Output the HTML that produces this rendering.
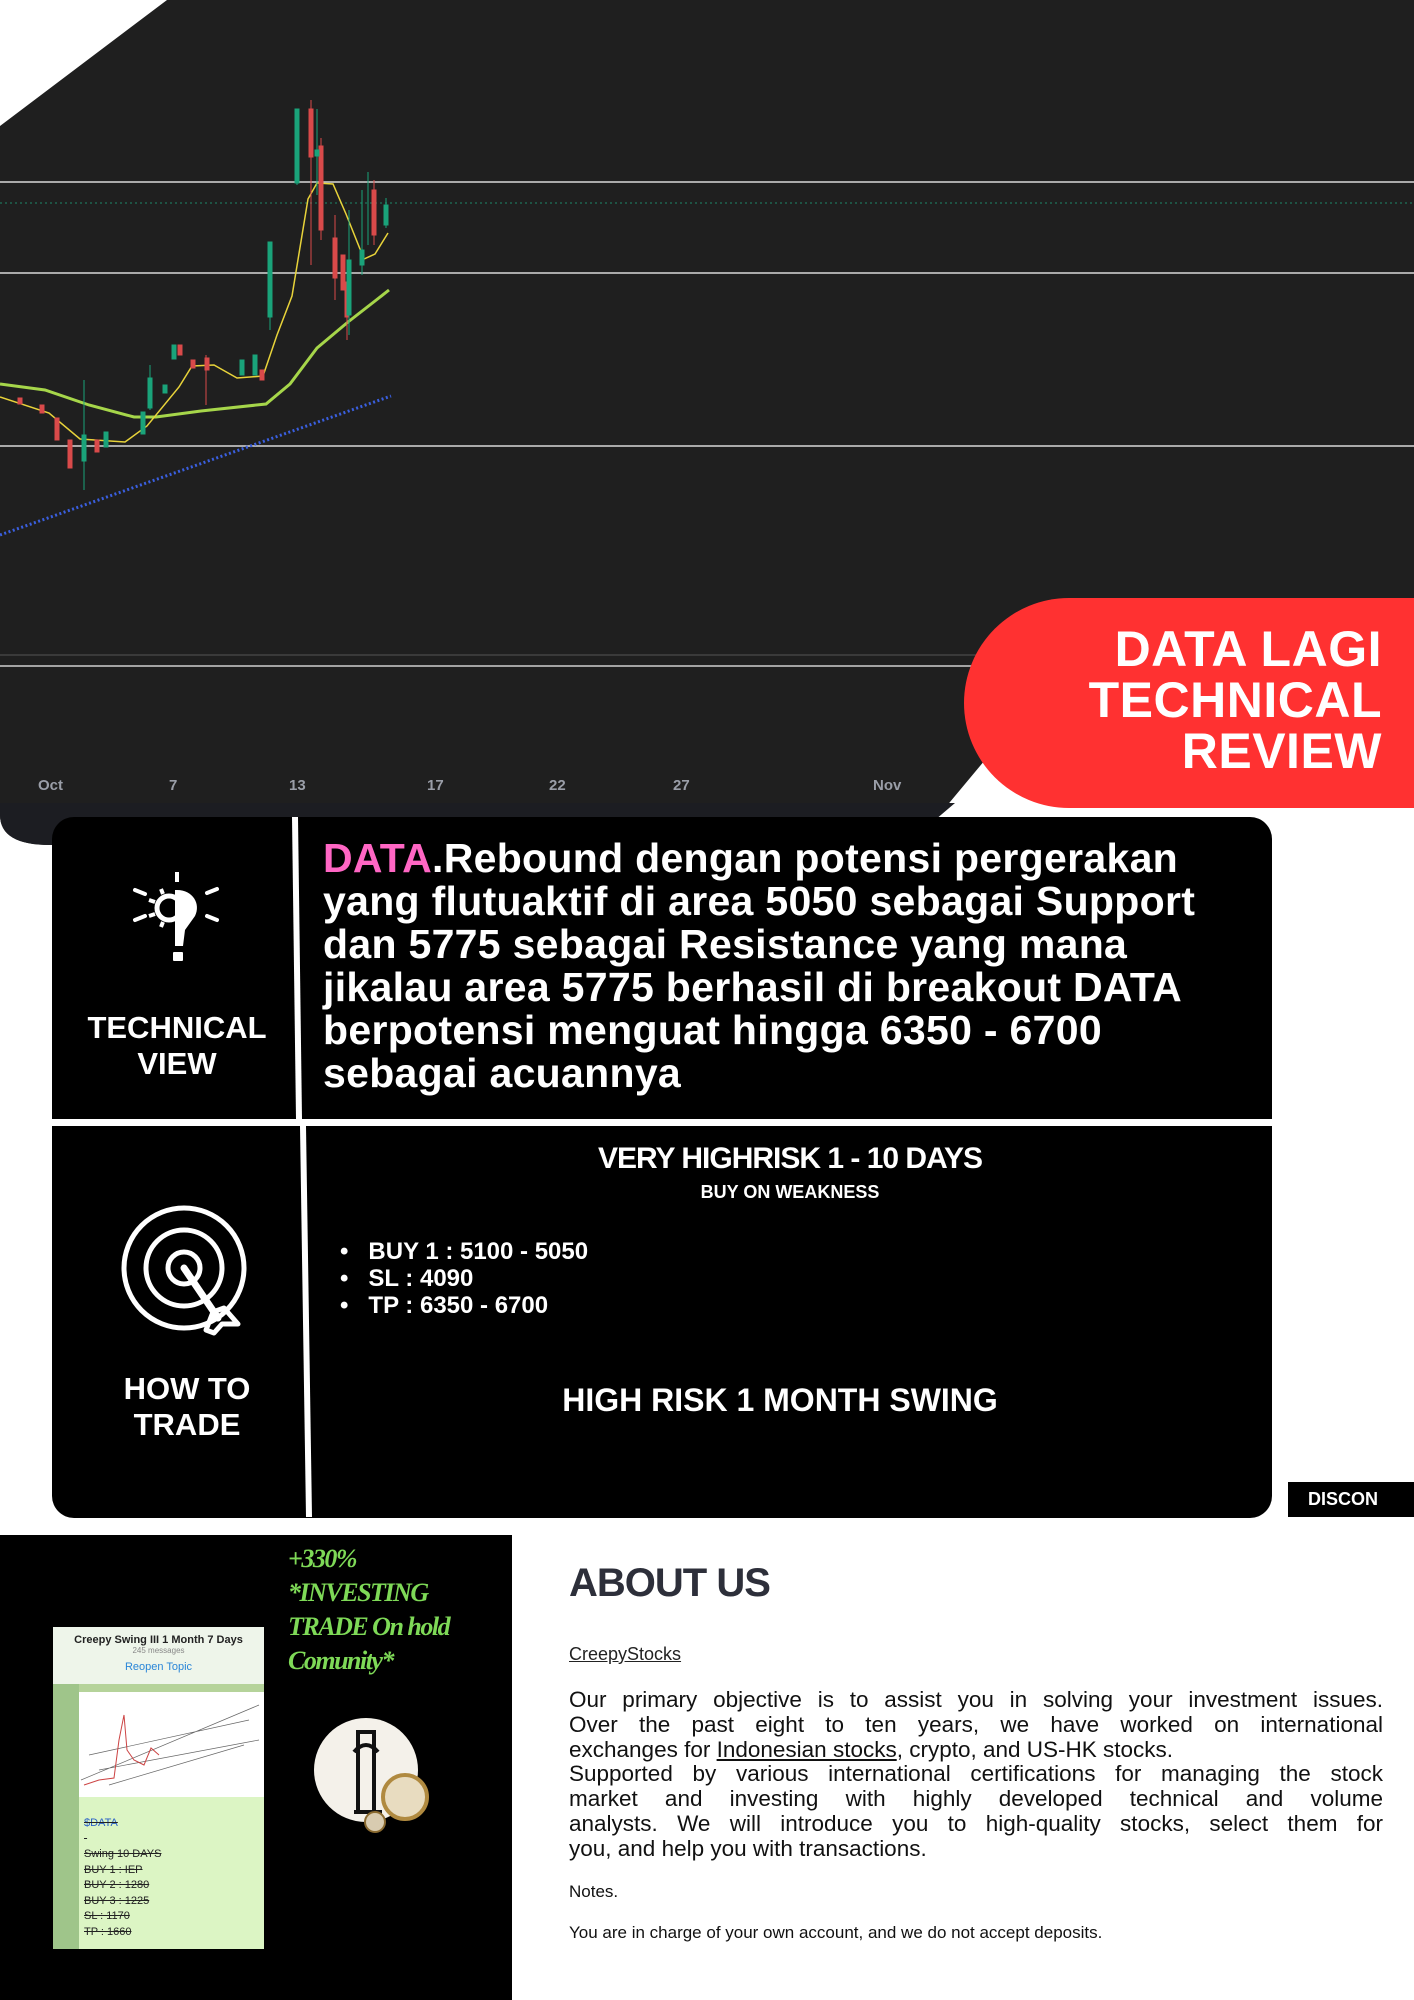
<!DOCTYPE html>
<html><head><meta charset="utf-8">
<style>
*{margin:0;padding:0;box-sizing:border-box}
body{width:1414px;height:2000px;background:#fff;position:relative;overflow:hidden;font-family:"Liberation Sans",sans-serif}
.abs{position:absolute}
.b{font-weight:bold}
.ax{position:absolute;top:777px;color:#9a9ea8;font-size:15px;font-weight:bold}
.para div{text-align:justify;text-align-last:justify;height:24.8px;line-height:24.8px}
.para div.l{text-align-last:left}
</style></head><body>

<svg class="abs" style="left:0;top:0" width="1414" height="845" viewBox="0 0 1414 845">
  <path d="M167 0 H1414 V760 H985 L935 820 V845 H50 Q0 845 0 815 V126 Z" fill="#1f1f1f"/>
  <path d="M0 803 H955 L935 820 V845 H50 Q0 845 0 815 Z" fill="#1c1d22"/>
  <line x1="0" y1="182" x2="1414" y2="182" stroke="#d8d8d8" stroke-width="1.5"/>
  <line x1="0" y1="273" x2="1414" y2="273" stroke="#d8d8d8" stroke-width="1.5"/>
  <line x1="0" y1="446" x2="1414" y2="446" stroke="#d8d8d8" stroke-width="1.5"/>
  <line x1="0" y1="203" x2="1414" y2="203" stroke="#1e8a6a" stroke-width="1" stroke-dasharray="2 3"/>
  <line x1="0" y1="655" x2="1414" y2="655" stroke="#555" stroke-width="1"/>
  <line x1="0" y1="666" x2="1414" y2="666" stroke="#cfcfcf" stroke-width="1.5"/>
  <polyline fill="none" stroke="#a6d64a" stroke-width="3" points="0,384 45,390 89,405 134,417 156,417 201,411 266,404 290,384 317,348 348,322 375,301 389,290"/>
  <polyline fill="none" stroke="#e8d33a" stroke-width="1.5" points="0,397 49,413 80,439 125,442 147,426 179,387 192,366 214,365 237,378 263,376 277,335 292,296 308,199 317,183 333,184 346,214 364,259 375,254 388,233"/>
  <line x1="0" y1="535" x2="391" y2="396" stroke="#3a5fe0" stroke-width="3" stroke-dasharray="2 2.5"/>
  <g stroke-width="1">
    <g fill="#d94a4a" stroke="#d94a4a">
      <rect x="309" y="109" width="4" height="48"/><line x1="311" y1="100" x2="311" y2="265"/>
      <rect x="319" y="146" width="4" height="84"/><line x1="321" y1="138" x2="321" y2="240"/>
      <rect x="333" y="238" width="4" height="40"/><line x1="335" y1="215" x2="335" y2="300"/>
      <rect x="341" y="255" width="4" height="35"/>
      <rect x="345" y="282" width="4" height="35"/><line x1="347" y1="270" x2="347" y2="340"/>
      <rect x="372" y="190" width="4" height="45"/><line x1="374" y1="180" x2="374" y2="245"/>
      <rect x="205" y="358" width="4" height="12"/><rect x="178" y="345" width="4" height="10"/>
      <rect x="191" y="360" width="4" height="8"/><line x1="206" y1="355" x2="206" y2="405"/>
      <rect x="55" y="418" width="4" height="22"/><rect x="68" y="440" width="4" height="28"/>
      <rect x="18" y="398" width="4" height="6"/><rect x="40" y="405" width="4" height="8"/>
      <rect x="95" y="440" width="4" height="12"/><rect x="260" y="370" width="4" height="10"/>
    </g>
    <g fill="#1aa37a" stroke="#1aa37a">
      <rect x="295" y="109" width="4" height="74"/><line x1="297" y1="109" x2="297" y2="185"/>
      <rect x="268" y="242" width="4" height="75"/><line x1="270" y1="242" x2="270" y2="330"/>
      <rect x="315" y="150" width="4" height="6"/><line x1="317" y1="109" x2="317" y2="195"/>
      <rect x="347" y="260" width="4" height="55"/><line x1="349" y1="210" x2="349" y2="335"/>
      <rect x="360" y="250" width="4" height="15"/><line x1="362" y1="190" x2="362" y2="275"/>
      <rect x="384" y="205" width="4" height="20"/><line x1="386" y1="198" x2="386" y2="228"/>
      <line x1="368" y1="172" x2="368" y2="245"/>
      <rect x="148" y="378" width="4" height="30"/><line x1="150" y1="365" x2="150" y2="410"/>
      <rect x="82" y="435" width="4" height="26"/><line x1="84" y1="380" x2="84" y2="490"/>
      <rect x="104" y="432" width="4" height="15"/><rect x="141" y="412" width="4" height="22"/>
      <rect x="240" y="360" width="4" height="15"/><rect x="253" y="355" width="4" height="20"/>
      <rect x="172" y="345" width="4" height="14"/><rect x="163" y="385" width="4" height="8"/>
    </g>
  </g>
</svg>
<div class="ax" style="left:38px">Oct</div>
<div class="ax" style="left:169px">7</div>
<div class="ax" style="left:289px">13</div>
<div class="ax" style="left:427px">17</div>
<div class="ax" style="left:549px">22</div>
<div class="ax" style="left:673px">27</div>
<div class="ax" style="left:873px">Nov</div>

<div class="abs" style="left:964px;top:598px;width:460px;height:210px;background:#ff3131;border-radius:105px 0 0 105px"></div>
<div class="abs b" style="right:32px;top:624px;color:#fff;font-size:50px;line-height:51px;text-align:right;letter-spacing:0.5px">DATA LAGI<br>TECHNICAL<br>REVIEW</div>

<div class="abs" style="left:52px;top:817px;width:1220px;height:302px;background:#000;border-radius:22px 22px 0 0"></div>
<div class="abs" style="left:52px;top:1126px;width:1220px;height:392px;background:#000;border-radius:0 0 22px 22px"></div>
<div class="abs" style="left:52px;top:1119px;width:1220px;height:7px;background:#fff"></div>
<svg class="abs" style="left:0;top:817px" width="340" height="705">
  <line x1="295" y1="0" x2="299" y2="302" stroke="#fff" stroke-width="6"/>
  <line x1="303" y1="309" x2="309" y2="700" stroke="#fff" stroke-width="6"/>
</svg>
<svg class="abs" style="left:127px;top:868px" width="100" height="112" viewBox="0 0 100 112">
  <rect x="48" y="4" width="4" height="10" fill="#fff"/>
  <line x1="8" y1="22" x2="18" y2="26" stroke="#fff" stroke-width="4" stroke-linecap="round"/>
  <line x1="8" y1="52" x2="18" y2="48" stroke="#fff" stroke-width="4" stroke-linecap="round"/>
  <line x1="80" y1="25" x2="90" y2="21" stroke="#fff" stroke-width="4" stroke-linecap="round"/>
  <line x1="80" y1="48" x2="90" y2="52" stroke="#fff" stroke-width="4" stroke-linecap="round"/>
  <path d="M50 22 C66 22 74 36 68 48 L58 62 L56 78 H48 V22 Z" fill="#fff"/>
  <circle cx="42" cy="40" r="12" fill="none" stroke="#fff" stroke-width="5"/>
  <path d="M28 34 l-6 -2 M28 46 l-6 2 M36 26 l-2 -5 M36 54 l-2 5" stroke="#fff" stroke-width="4"/>
  <rect x="46" y="84" width="10" height="9" rx="1" fill="#fff"/>
</svg>
<div class="abs b" style="left:62px;width:230px;top:1010px;text-align:center;color:#fff;font-size:31px;line-height:36px">TECHNICAL<br>VIEW</div>
<svg class="abs" style="left:118px;top:1200px" width="140" height="160" viewBox="0 0 140 160">
  <circle cx="66" cy="68" r="60" fill="none" stroke="#fff" stroke-width="5"/>
  <circle cx="66" cy="68" r="38" fill="none" stroke="#fff" stroke-width="5"/>
  <circle cx="66" cy="68" r="16" fill="none" stroke="#fff" stroke-width="5"/>
  <line x1="66" y1="68" x2="100" y2="118" stroke="#fff" stroke-width="7" stroke-linecap="round"/>
  <path d="M95 112 L88 130 L96 133 L104 124 L120 124 L106 108 Z" fill="none" stroke="#fff" stroke-width="5" stroke-linejoin="round"/>
</svg>
<div class="abs b" style="left:72px;width:230px;top:1371px;text-align:center;color:#fff;font-size:31px;line-height:36px">HOW TO<br>TRADE</div>

<div class="abs b" style="left:323px;top:837px;width:945px;color:#fff;font-size:41px;line-height:43px;letter-spacing:0.3px;white-space:nowrap"><span style="color:#ff66c4">DATA</span>.Rebound dengan potensi pergerakan<br>yang flutuaktif di area 5050 sebagai Support<br>dan 5775 sebagai Resistance yang mana<br>jikalau area 5775 berhasil di breakout DATA<br>berpotensi menguat hingga 6350 - 6700<br>sebagai acuannya</div>

<div class="abs b" style="left:540px;width:500px;top:1142px;text-align:center;color:#fff;font-size:30px;letter-spacing:-1px">VERY HIGHRISK 1 - 10 DAYS</div>
<div class="abs b" style="left:560px;width:460px;top:1182px;text-align:center;color:#fff;font-size:18px">BUY ON WEAKNESS</div>
<div class="abs b" style="left:340px;top:1238px;color:#fff;font-size:24px;line-height:27px">
<div>•&nbsp;&nbsp;&nbsp;BUY 1 : 5100 - 5050</div>
<div>•&nbsp;&nbsp;&nbsp;SL : 4090</div>
<div>•&nbsp;&nbsp;&nbsp;TP : 6350 - 6700</div></div>
<div class="abs b" style="left:520px;width:520px;top:1382px;text-align:center;color:#fff;font-size:32px">HIGH RISK 1 MONTH SWING</div>

<div class="abs b" style="left:1288px;top:1482px;width:126px;height:35px;background:#000;color:#fff;font-size:18px;line-height:35px;padding-left:20px">DISCON</div>

<div class="abs" style="left:0;top:1535px;width:512px;height:465px;background:#000"></div>
<div class="abs" style="left:53px;top:1627px;width:211px;height:322px;background:#dcf5c4"></div>
<div class="abs" style="left:53px;top:1627px;width:211px;height:57px;background:#eef5ea;font-size:11px;text-align:center;color:#222">
<div style="margin-top:7px;font-weight:bold">Creepy Swing III 1 Month 7 Days</div>
<div style="color:#888;font-size:8px">245 messages</div>
<div style="color:#2a86d8;margin-top:6px">Reopen Topic</div></div>
<div class="abs" style="left:53px;top:1684px;width:26px;height:265px;background:#9fc58a"></div>
<div class="abs" style="left:79px;top:1684px;width:185px;height:113px;background:#fff;border-top:8px solid #b5d39a"></div>
<svg class="abs" style="left:79px;top:1700px" width="185" height="95">
<path d="M2 80 L180 5 M10 55 L170 20 M20 70 L180 40 M30 85 L165 45" stroke="#666" stroke-width="0.7" fill="none"/>
<path d="M5 85 L20 80 L35 78 L40 40 L45 15 L48 50 L55 60 L65 65 L72 48 L80 55" stroke="#c44" stroke-width="1" fill="none"/>
</svg>
<div class="abs" style="left:84px;top:1816px;font-size:11px;line-height:15.5px;color:#222;text-decoration:line-through">
<div style="color:#2a60c8">$DATA</div><div>&nbsp;</div><div>Swing 10 DAYS</div><div>BUY 1 : IEP</div><div>BUY 2 : 1280</div><div>BUY 3 : 1225</div><div>SL : 1170</div><div>TP : 1660</div></div>
<div class="abs" style="left:288px;top:1542px;color:#7ed957;font-family:'Liberation Serif',serif;font-style:italic;font-weight:bold;font-size:26px;line-height:34px;letter-spacing:-1.5px">+330%<br>*INVESTING<br>TRADE On hold<br>Comunity*</div>
<svg class="abs" style="left:310px;top:1712px" width="130" height="150">
<circle cx="56" cy="58" r="52" fill="#f4f1ea"/>
<path d="M48 20 h16 v80 h-16 Z M44 40 q12 -14 24 0 M44 100 h28" stroke="#111" stroke-width="4" fill="none"/>
<circle cx="95" cy="85" r="22" fill="#e8dcc0" stroke="#b08a40" stroke-width="4"/>
<circle cx="65" cy="110" r="10" fill="#d8cbb0" stroke="#8a6a30" stroke-width="2"/>
</svg>

<div class="abs b" style="left:569px;top:1561px;font-size:40px;color:#2d2f3a;letter-spacing:-1px">ABOUT US</div>
<div class="abs" style="left:569px;top:1644px;font-size:18px;color:#222;text-decoration:underline">CreepyStocks</div>
<div class="abs para" style="left:569px;top:1688px;width:814px;font-size:22.5px;color:#111">
<div>Our primary objective is to assist you in solving your investment issues.</div>
<div>Over the past eight to ten years, we have worked on international</div>
<div class="l">exchanges for <u>Indonesian stocks</u>, crypto, and US-HK stocks.</div>
<div>Supported by various international certifications for managing the stock</div>
<div>market and investing with highly developed technical and volume</div>
<div>analysts. We will introduce you to high-quality stocks, select them for</div>
<div class="l">you, and help you with transactions.</div>
</div>
<div class="abs" style="left:569px;top:1882px;font-size:17px;color:#111">Notes.</div>
<div class="abs" style="left:569px;top:1923px;font-size:17px;color:#111">You are in charge of your own account, and we do not accept deposits.</div>
</body></html>
